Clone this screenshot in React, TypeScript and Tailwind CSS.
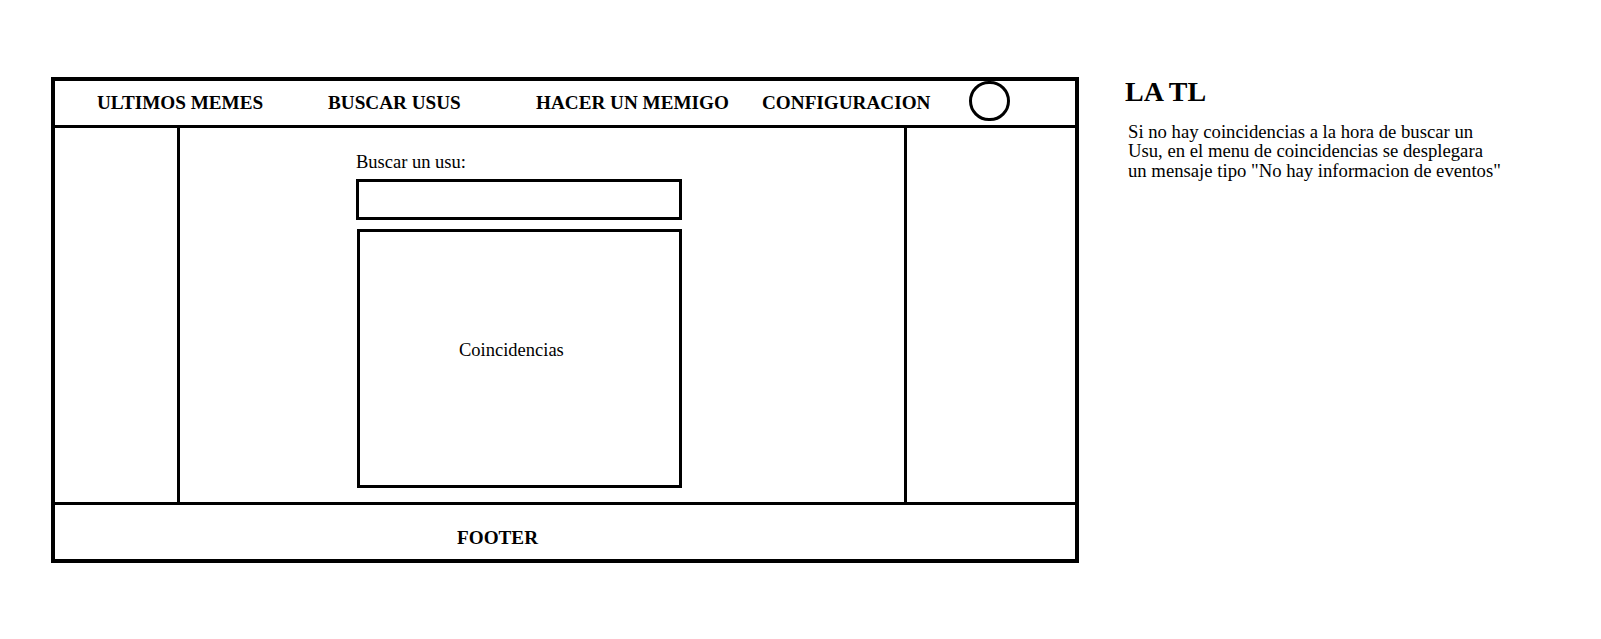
export default function App() {
  const nav = ["ULTIMOS MEMES", "BUSCAR USUS", "HACER UN MEMIGO", "CONFIGURACION"];

  return (
    <div
      className="w-[1601px] h-[639px] bg-white text-black flex items-start pt-[77px] pl-[51px]"
      style={{ fontFamily: '"Liberation Serif", "Times New Roman", serif' }}
    >
      {/* wireframe */}
      <div className="w-[1028px] border-4 border-black flex flex-col">
        {/* header */}
        <div className="h-[47px] border-b-[3px] border-black grid grid-cols-[231px_208px_226px_207px_auto] items-center pl-[42px]">
          {nav.map((n) => (
            <span key={n} className="text-[19.2px] leading-[22px] font-bold whitespace-nowrap">
              {n}
            </span>
          ))}
          <div className="w-[41px] h-[40px] mb-[4px] rounded-full border-[3px] border-black" />
        </div>

        {/* body */}
        <div className="h-[374px] flex">
          <div className="w-[125px] border-r-[3px] border-black" />
          <div className="w-[727px] border-r-[3px] border-black pl-[176px] pt-[24px]">
            <p className="text-[18.5px] leading-[21px]">Buscar un usu:</p>
            <div className="mt-[6px] w-[326px] h-[41px] border-[3px] border-black" />
            <div className="mt-[9px] ml-[1px] w-[325px] h-[259px] border-[3px] border-black pl-[99px] pt-[107px]">
              <span className="text-[18.5px] leading-[21px]">Coincidencias</span>
            </div>
          </div>
          <div className="flex-1" />
        </div>

        {/* footer */}
        <div className="h-[57px] border-t-[3px] border-black pl-[402px] pt-[22px]">
          <span className="text-[19.2px] leading-[22px] font-bold">FOOTER</span>
        </div>
      </div>

      {/* notas */}
      <div className="ml-[46px]">
        <h2 className="text-[28px] leading-[30px] font-bold">LA TL</h2>
        <p className="mt-[15px] ml-[3px] text-[18.7px] leading-[19.4px]">
          Si no hay coincidencias a la hora de buscar un
          <br />
          Usu, en el menu de coincidencias se desplegara
          <br />
          un mensaje tipo "No hay informacion de eventos"
        </p>
      </div>
    </div>
  );
}
